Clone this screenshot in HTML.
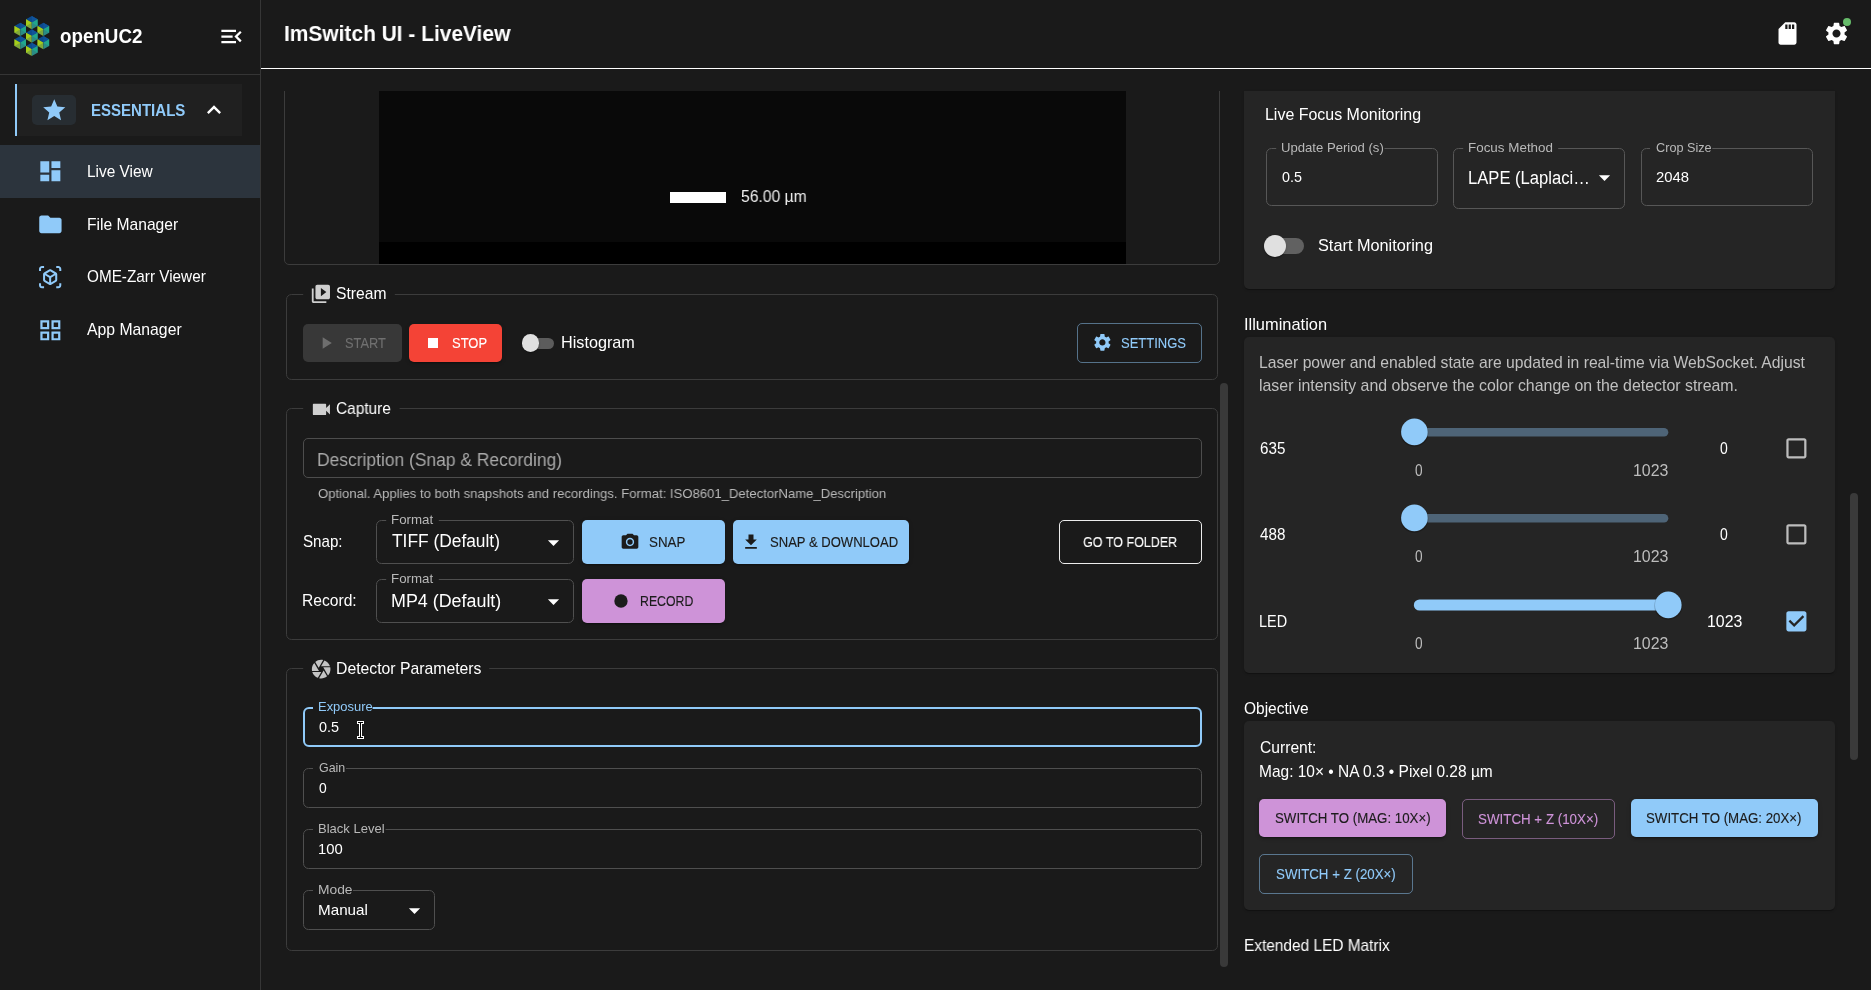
<!DOCTYPE html>
<html lang="en"><head><meta charset="utf-8"><title>ImSwitch UI - LiveView</title><style>
html,body{margin:0;padding:0;background:#1a1a1a;}
body{width:1871px;height:990px;position:relative;overflow:hidden;font-family:"Liberation Sans", sans-serif;}
div,button,nav,svg.ic,svg.fs,.abs,.t{position:absolute;}
#app{left:0;top:0;width:1871px;height:990px;will-change:transform}
nav{box-sizing:border-box}
button{padding:0;margin:0;border:0;background:none;font:inherit}
ul,li{margin:0;padding:0;list-style:none}
.t{margin:0;white-space:nowrap;line-height:0;height:0;transform-origin:0 0;display:block;font-style:normal}
h1,h2,h3,p,label{margin:0;font-weight:400}
</style></head>
<body>
<div id="app">
<nav class="abs" style="left:0;top:0;width:261px;height:990px;background:#1a1a1a;border-right:1px solid #363636">
<svg class="abs" style="left:0;top:0;width:70px;height:70px" viewBox="0 0 70 70"><polygon points="31.80,15.99 37.58,19.32 31.80,22.66 26.02,19.32" fill="#0c4a8e"/><polygon points="31.80,15.99 37.58,19.32 31.80,22.66" fill="#0f539a"/><polygon points="26.02,19.32 31.80,22.66 31.80,29.33 26.02,26.00" fill="#7fa83a"/><polygon points="26.02,19.32 31.80,22.66 26.02,26.00" fill="#a5cd1b"/><polygon points="31.80,22.66 37.58,19.32 37.58,26.00 31.80,29.33" fill="#2b8b84"/><polygon points="31.80,22.66 37.58,19.32 37.58,26.00" fill="#20a68d"/><polygon points="20.25,22.66 26.02,25.99 20.25,29.33 14.47,25.99" fill="#0c4a8e"/><polygon points="20.25,22.66 26.02,25.99 20.25,29.33" fill="#0f539a"/><polygon points="14.47,25.99 20.25,29.33 20.25,36.00 14.47,32.66" fill="#7fa83a"/><polygon points="14.47,25.99 20.25,29.33 14.47,32.66" fill="#a5cd1b"/><polygon points="20.25,29.33 26.02,25.99 26.02,32.66 20.25,36.00" fill="#2b8b84"/><polygon points="20.25,29.33 26.02,25.99 26.02,32.66" fill="#20a68d"/><polygon points="43.35,22.66 49.13,25.99 43.35,29.33 37.58,25.99" fill="#0c4a8e"/><polygon points="43.35,22.66 49.13,25.99 43.35,29.33" fill="#0f539a"/><polygon points="37.58,25.99 43.35,29.33 43.35,36.00 37.58,32.66" fill="#7fa83a"/><polygon points="37.58,25.99 43.35,29.33 37.58,32.66" fill="#a5cd1b"/><polygon points="43.35,29.33 49.13,25.99 49.13,32.66 43.35,36.00" fill="#2b8b84"/><polygon points="43.35,29.33 49.13,25.99 49.13,32.66" fill="#20a68d"/><polygon points="31.80,29.33 37.58,32.66 31.80,36.00 26.02,32.66" fill="#0c4a8e"/><polygon points="31.80,29.33 37.58,32.66 31.80,36.00" fill="#0f539a"/><polygon points="26.02,32.66 31.80,36.00 31.80,42.67 26.02,39.34" fill="#7fa83a"/><polygon points="26.02,32.66 31.80,36.00 26.02,39.34" fill="#a5cd1b"/><polygon points="31.80,36.00 37.58,32.66 37.58,39.34 31.80,42.67" fill="#2b8b84"/><polygon points="31.80,36.00 37.58,32.66 37.58,39.34" fill="#20a68d"/><polygon points="20.25,36.00 26.02,39.34 20.25,42.67 14.47,39.34" fill="#0c4a8e"/><polygon points="20.25,36.00 26.02,39.34 20.25,42.67" fill="#0f539a"/><polygon points="14.47,39.34 20.25,42.67 20.25,49.34 14.47,46.01" fill="#7fa83a"/><polygon points="14.47,39.34 20.25,42.67 14.47,46.01" fill="#a5cd1b"/><polygon points="20.25,42.67 26.02,39.34 26.02,46.01 20.25,49.34" fill="#2b8b84"/><polygon points="20.25,42.67 26.02,39.34 26.02,46.01" fill="#20a68d"/><polygon points="43.35,36.00 49.13,39.34 43.35,42.67 37.58,39.34" fill="#0c4a8e"/><polygon points="43.35,36.00 49.13,39.34 43.35,42.67" fill="#0f539a"/><polygon points="37.58,39.34 43.35,42.67 43.35,49.34 37.58,46.01" fill="#7fa83a"/><polygon points="37.58,39.34 43.35,42.67 37.58,46.01" fill="#a5cd1b"/><polygon points="43.35,42.67 49.13,39.34 49.13,46.01 43.35,49.34" fill="#2b8b84"/><polygon points="43.35,42.67 49.13,39.34 49.13,46.01" fill="#20a68d"/><polygon points="31.80,42.67 37.58,46.01 31.80,49.34 26.02,46.01" fill="#0c4a8e"/><polygon points="31.80,42.67 37.58,46.01 31.80,49.34" fill="#0f539a"/><polygon points="26.02,46.01 31.80,49.34 31.80,56.01 26.02,52.68" fill="#7fa83a"/><polygon points="26.02,46.01 31.80,49.34 26.02,52.68" fill="#a5cd1b"/><polygon points="31.80,49.34 37.58,46.01 37.58,52.68 31.80,56.01" fill="#2b8b84"/><polygon points="31.80,49.34 37.58,46.01 37.58,52.68" fill="#20a68d"/></svg>
<div class="t" style="left:60.10px;top:36px;font-size:20.8px;color:#fff;font-weight:700;transform:scaleX(0.9028)">openUC2</div>
<svg class="ic" viewBox="0 0 24 24" style="left:217.90px;top:22.70px;width:27px;height:27px;fill:#fff"><path d="M3 18h13v-2H3v2zm0-5h10v-2H3v2zm0-7v2h13V6H3zm18 9.590L17.420 12 21 8.410 19.590 7l-5 5 5 5L21 15.590z"/></svg>
<div style="left:0px;top:74px;width:260px;height:1px;background:#353535"></div>
<div style="left:15px;top:84px;width:227px;height:52px;background:#202020;border-left:2px solid #90caf9;box-sizing:border-box"></div>
<div style="left:32px;top:95px;width:44px;height:30px;background:#272d32;border-radius:5px"></div>
<svg class="ic" viewBox="0 0 24 24" style="left:40.75px;top:97.00px;width:26.5px;height:26.5px;fill:#90caf9"><path d="M12 17.270L18.180 21l-1.640-7.030L22 9.240l-7.190-.610L12 2 9.190 8.630 2 9.240l5.460 4.730L5.820 21z"/></svg>
<span class="t" style="left:90.87px;top:110px;font-size:16.2px;color:#90caf9;font-weight:700;transform:scaleX(0.9282)">ESSENTIALS</span>
<svg class="ic" viewBox="0 0 24 24" style="left:200.20px;top:96.45px;width:28px;height:28px;fill:#fff"><path d="M12 8l-6 6 1.410 1.410L12 10.830l4.590 4.580L18 14z"/></svg>
<div style="left:0px;top:145px;width:260px;height:53px;background:#2c343d"></div>
<ul>
<li><svg class="ic" viewBox="0 0 24 24" style="left:36.65px;top:157.95px;width:26.7px;height:26.7px;fill:#90caf9"><path d="M3 13h8V3H3v10zm0 8h8v-6H3v6zm10 0h8V11h-8v10zm0-18v6h8V3h-8z"/></svg><span class="t" style="left:86.72px;top:172px;font-size:15.75px;color:#fff;font-weight:400;transform:scaleX(0.9798)">Live View</span></li>
<li><svg class="ic" viewBox="0 0 24 24" style="left:36.60px;top:210.70px;width:26.8px;height:26.8px;fill:#90caf9"><path d="M10 4H4c-1.1 0-1.99.9-1.99 2L2 18c0 1.1.9 2 2 2h16c1.1 0 2-.9 2-2V8c0-1.1-.9-2-2-2h-8l-2-2z"/></svg><span class="t" style="left:86.61px;top:225px;font-size:15.75px;color:#fff;font-weight:400;transform:scaleX(0.9915)">File Manager</span></li>
<li><svg class="ic" viewBox="0 0 24 24" style="left:38.15px;top:265.05px;width:24.3px;height:24.3px;fill:#90caf9"><path d="M3 4c0-.55.45-1 1-1h2V1H4C2.34 1 1 2.34 1 4v2h2V4zm0 16v-2H1v2c0 1.66 1.34 3 3 3h2v-2H4c-.55 0-1-.45-1-1zM20 1h-2v2h2c.55 0 1 .45 1 1v2h2V4c0-1.66-1.34-3-3-3zm1 19c0 .55-.45 1-1 1h-2v2h2c1.66 0 3-1.34 3-3v-2h-2v2zm-2-5.13V9.130c0-.72-.38-1.380-1-1.730l-5-2.880c-.31-.18-.65-.27-1-.27s-.69.09-1 .27l-5 2.870c-.62.360-1 1.020-1 1.740v5.740c0 .72.38 1.380 1 1.730l5 2.880c.31.18.65.27 1 .27s.69-.09 1-.27l5-2.880c.62-.350 1-1.010 1-1.730zm-8 2.300l-4-2.300v-4.630l4 2.330v4.600zm1-6.330L8.040 8.530 12 6.250l3.960 2.280L12 10.840zm5 4.030l-4 2.300v-4.600l4-2.330v4.630z"/></svg><span class="t" style="left:87.00px;top:277px;font-size:15.75px;color:#fff;font-weight:400;transform:scaleX(0.9715)">OME-Zarr Viewer</span></li>
<li><svg class="ic" viewBox="0 0 24 24" style="left:36.75px;top:316.55px;width:26.7px;height:26.7px;fill:#90caf9"><path d="M3 3v8h8V3H3zm6 6H5V5h4v4zm-6 4v8h8v-8H3zm6 6H5v-4h4v4zm4-16v8h8V3h-8zm6 6h-4V5h4v4zm-6 4v8h8v-8h-8zm6 6h-4v-4h4v4z"/></svg><span class="t" style="left:86.90px;top:330px;font-size:15.75px;color:#fff;font-weight:400;transform:scaleX(1.0009)">App Manager</span></li>
</ul>
</nav>
<header>
<h1 class="t" style="left:283.78px;top:33px;font-size:22.8px;color:#fff;font-weight:700;transform:scaleX(0.9175)">ImSwitch UI - LiveView</h1>
<svg class="ic" viewBox="0 0 24 24" style="left:1773.60px;top:19.80px;width:27px;height:27px;fill:#fff"><path d="M18 2h-8L4.020 8 4 20c0 1.100.9 2 2 2h12c1.100 0 2-.9 2-2V4c0-1.100-.9-2-2-2zm-6 6h-2V4h2v4zm3 0h-2V4h2v4zm3 0h-2V4h2v4z"/></svg>
<svg class="ic" viewBox="0 0 24 24" style="left:1822.50px;top:19.80px;width:27px;height:27px;fill:#fff"><path d="M19.140 12.940c.04-.3.06-.61.06-.94 0-.32-.02-.64-.07-.94l2.030-1.580c.18-.14.23-.41.12-.61l-1.920-3.320c-.12-.22-.37-.29-.59-.22l-2.390.96c-.5-.38-1.030-.7-1.620-.94l-.36-2.540c-.04-.24-.24-.41-.48-.41h-3.840c-.24 0-.43.17-.47.41l-.36 2.540c-.59.24-1.130.57-1.620.94l-2.390-.96c-.22-.08-.47 0-.59.22L2.740 8.870c-.12.21-.08.47.12.61l2.030 1.580c-.05.3-.09.63-.09.94s.02.64.07.94l-2.030 1.580c-.18.14-.23.41-.12.61l1.920 3.320c.12.22.37.29.59.22l2.390-.96c.5.38 1.030.7 1.620.94l.36 2.540c.05.24.24.41.48.41h3.840c.24 0 .44-.17.47-.41l.36-2.540c.59-.24 1.130-.56 1.620-.94l2.390.96c.22.08.47 0 .59-.22l1.920-3.320c.12-.22.07-.47-.12-.61l-2.010-1.580zM12 15.600c-1.980 0-3.600-1.620-3.600-3.600s1.620-3.600 3.600-3.600 3.600 1.620 3.600 3.600-1.620 3.600-3.600 3.600z"/></svg>
<div style="left:1842.5px;top:17.5px;width:8.799999999999955px;height:8.8px;background:#66bb6a;border-radius:50%"></div>
<div style="left:261px;top:68px;width:1610px;height:1px;background:#fff"></div>
</header>
<main>
<section>
<div style="left:284px;top:85px;width:936px;height:180px;border:1px solid #3c3c3c;border-radius:5px;box-sizing:border-box;clip-path:inset(6px 0 0 0)"></div>
<div style="left:379px;top:91px;width:747px;height:173px;background:#090909"></div>
<div style="left:379px;top:241.7px;width:747px;height:22.30000000000001px;background:#000"></div>
<div style="left:670px;top:192px;width:55.5px;height:11px;background:#fff"></div>
<span class="t" style="left:741.30px;top:197px;font-size:16px;color:#f0f0f0;font-weight:400;transform:scaleX(0.9790)">56.00 µm</span>
</section>
<section>
<svg class="fs" style="left:286px;top:294px;width:932px;height:86px" viewBox="0 0 932 86"><path d="M17.20 0.5 H5.5 A5 5 0 0 0 0.5 5.5 V80.5 A5 5 0 0 0 5.5 85.5 H926.5 A5 5 0 0 0 931.5 80.5 V5.5 A5 5 0 0 0 926.5 0.5 H108.80" fill="none" stroke="#3c3c3c" stroke-width="1"/></svg>
<svg class="ic" viewBox="0 0 24 24" style="left:310.20px;top:283.10px;width:21.8px;height:21.8px;fill:#cfcfcf"><path d="M4 6H2v14c0 1.100.9 2 2 2h14v-2H4V6zm16-4H8c-1.100 0-2 .9-2 2v12c0 1.100.9 2 2 2h12c1.100 0 2-.9 2-2V4c0-1.100-.9-2-2-2zm-8 12.500v-9l6 4.500-6 4.500z"/></svg>
<h2 class="t" style="left:336.10px;top:294px;font-size:15.75px;color:#fff;font-weight:400;transform:scaleX(0.9932)">Stream</h2>
<button style="left:303px;top:324px;width:99px;height:38px;background:#383838;border-radius:5px"></button>
<svg class="ic" viewBox="0 0 24 24" style="left:316.00px;top:333.00px;width:20px;height:20px;fill:#6e6e6e"><path d="M8 5v14l11-7z"/></svg>
<span class="t" style="left:344.50px;top:343px;font-size:15.5px;color:#707070;font-weight:400;transform:scaleX(0.8275);-webkit-text-stroke:0.12px #707070">START</span>
<button style="left:409px;top:324px;width:93px;height:38px;background:#f44336;border-radius:5px;box-shadow:0 3px 1px -2px rgba(0,0,0,.2),0 2px 2px rgba(0,0,0,.14),0 1px 5px rgba(0,0,0,.12)"></button>
<svg class="ic" viewBox="0 0 24 24" style="left:423.00px;top:333.30px;width:20px;height:20px;fill:#fff"><path d="M6 6h12v12H6z"/></svg>
<span class="t" style="left:451.70px;top:343px;font-size:15.5px;color:#fff;font-weight:400;transform:scaleX(0.8369);-webkit-text-stroke:0.12px #fff">STOP</span>
<div style="left:524.5px;top:337.7px;width:29.5px;height:11.199999999999989px;background:#5c5c5c;border-radius:6px"></div>
<div style="left:521.8px;top:334.4px;width:17.40000000000009px;height:17.400000000000034px;background:#e0e0e0;border-radius:50%;box-shadow:0 2px 1px -1px rgba(0,0,0,.2),0 1px 1px rgba(0,0,0,.14),0 1px 3px rgba(0,0,0,.12)"></div>
<span class="t" style="left:560.77px;top:343px;font-size:15.75px;color:#fff;font-weight:400;transform:scaleX(1.0291)">Histogram</span>
<button style="left:1077px;top:323px;width:125px;height:40px;border:1px solid rgba(144,202,249,.5);border-radius:5px;box-sizing:border-box"></button>
<svg class="ic" viewBox="0 0 24 24" style="left:1091.60px;top:332.40px;width:20.8px;height:20.8px;fill:#90caf9"><path d="M19.140 12.940c.04-.3.06-.61.06-.94 0-.32-.02-.64-.07-.94l2.030-1.580c.18-.14.23-.41.12-.61l-1.920-3.320c-.12-.22-.37-.29-.59-.22l-2.390.96c-.5-.38-1.030-.7-1.620-.94l-.36-2.540c-.04-.24-.24-.41-.48-.41h-3.840c-.24 0-.43.17-.47.41l-.36 2.540c-.59.24-1.130.57-1.620.94l-2.390-.96c-.22-.08-.47 0-.59.22L2.740 8.870c-.12.21-.08.47.12.61l2.030 1.580c-.05.3-.09.63-.09.94s.02.64.07.94l-2.030 1.580c-.18.14-.23.41-.12.61l1.920 3.320c.12.22.37.29.59.22l2.390-.96c.5.38 1.030.7 1.620.94l.36 2.540c.05.24.24.41.48.41h3.840c.24 0 .44-.17.47-.41l.36-2.540c.59-.24 1.130-.56 1.620-.94l2.390.96c.22.08.47 0 .59-.22l1.920-3.320c.12-.22.07-.47-.12-.61l-2.010-1.580zM12 15.600c-1.980 0-3.600-1.620-3.600-3.600s1.620-3.600 3.600-3.600 3.600 1.620 3.600 3.600-1.620 3.600-3.600 3.600z"/></svg>
<span class="t" style="left:1120.50px;top:343px;font-size:15.5px;color:#90caf9;font-weight:400;transform:scaleX(0.8384);-webkit-text-stroke:0.12px #90caf9">SETTINGS</span>
</section>
<section>
<svg class="fs" style="left:286px;top:408px;width:932px;height:232px" viewBox="0 0 932 232"><path d="M17.20 0.5 H5.5 A5 5 0 0 0 0.5 5.5 V226.5 A5 5 0 0 0 5.5 231.5 H926.5 A5 5 0 0 0 931.5 226.5 V5.5 A5 5 0 0 0 926.5 0.5 H113.60" fill="none" stroke="#3c3c3c" stroke-width="1"/></svg>
<svg class="ic" viewBox="0 0 24 24" style="left:309.70px;top:397.70px;width:22.8px;height:22.8px;fill:#cfcfcf"><path d="M17 10.500V7c0-.55-.45-1-1-1H4c-.55 0-1 .45-1 1v10c0 .55.45 1 1 1h12c.55 0 1-.45 1-1v-3.500l4 4v-11l-4 4z"/></svg>
<h2 class="t" style="left:336.10px;top:409px;font-size:15.75px;color:#fff;font-weight:400;transform:scaleX(0.9792)">Capture</h2>
<div style="left:303px;top:438px;width:899px;height:40px;border:1px solid #4d4d4d;border-radius:5px;box-sizing:border-box"></div>
<span class="t" style="left:317.43px;top:460px;font-size:18px;color:#a9a9a9;font-weight:400;transform:scaleX(0.9685)">Description (Snap &amp; Recording)</span>
<p class="t" style="left:318.30px;top:494px;font-size:13.5px;color:#b9b9b9;font-weight:400;transform:scaleX(0.9709)">Optional. Applies to both snapshots and recordings. Format: ISO8601_DetectorName_Description</p>
<span class="t" style="left:303.30px;top:542px;font-size:15.75px;color:#fff;font-weight:400;transform:scaleX(0.9602)">Snap:</span>
<svg class="fs" style="left:376px;top:520px;width:198px;height:44px" viewBox="0 0 198 44"><path d="M10.20 0.5 H5.5 A5 5 0 0 0 0.5 5.5 V38.5 A5 5 0 0 0 5.5 43.5 H192.5 A5 5 0 0 0 197.5 38.5 V5.5 A5 5 0 0 0 192.5 0.5 H62.80" fill="none" stroke="#4f4f4f" stroke-width="1"/></svg>
<label class="t" style="left:390.71px;top:520px;font-size:13.5px;color:#b9b9b9;font-weight:400;transform:scaleX(0.9856)">Format</label>
<span class="t" style="left:392.20px;top:541px;font-size:18px;color:#fff;font-weight:400;transform:scaleX(0.9638)">TIFF (Default)</span>
<svg class="ic" viewBox="0 0 24 24" style="left:539.70px;top:528.64px;width:27px;height:27px;fill:#fff"><path d="M7 10l5 5 5-5z"/></svg>
<button style="left:582px;top:520px;width:143px;height:44px;background:#90caf9;border-radius:5px;box-shadow:0 3px 1px -2px rgba(0,0,0,.2),0 2px 2px rgba(0,0,0,.14),0 1px 5px rgba(0,0,0,.12)"></button>
<svg class="ic" viewBox="0 0 24 24" style="left:619.70px;top:532.43px;width:20px;height:20px;fill:#1c1c1c"><circle cx="12" cy="12" r="3.200"/><path d="M9 2L7.170 4H4c-1.100 0-2 .9-2 2v12c0 1.100.9 2 2 2h16c1.100 0 2-.9 2-2V6c0-1.100-.9-2-2-2h-3.170L15 2H9zm3 15c-2.760 0-5-2.240-5-5s2.240-5 5-5 5 2.240 5 5-2.240 5-5 5z"/></svg>
<span class="t" style="left:648.70px;top:542px;font-size:15.5px;color:#1c1c1c;font-weight:400;transform:scaleX(0.8598);-webkit-text-stroke:0.15px #1c1c1c">SNAP</span>
<button style="left:733px;top:520px;width:176px;height:44px;background:#90caf9;border-radius:5px;box-shadow:0 3px 1px -2px rgba(0,0,0,.2),0 2px 2px rgba(0,0,0,.14),0 1px 5px rgba(0,0,0,.12)"></button>
<svg class="ic" viewBox="0 0 24 24" style="left:741.00px;top:532.22px;width:20px;height:20px;fill:#1c1c1c"><path d="M5 20h14v-2H5v2zM19 9h-4V3H9v6H5l7 7 7-7z"/></svg>
<span class="t" style="left:769.60px;top:542px;font-size:15.5px;color:#1c1c1c;font-weight:400;transform:scaleX(0.8420);-webkit-text-stroke:0.15px #1c1c1c">SNAP &amp; DOWNLOAD</span>
<button style="left:1059px;top:520px;width:143px;height:44px;border:1px solid #ececec;border-radius:5px;box-sizing:border-box"></button>
<span class="t" style="left:1083.40px;top:542px;font-size:15.5px;color:#fff;font-weight:400;transform:scaleX(0.8084);-webkit-text-stroke:0.12px #fff">GO TO FOLDER</span>
<span class="t" style="left:302.31px;top:601px;font-size:15.75px;color:#fff;font-weight:400;transform:scaleX(0.9911)">Record:</span>
<svg class="fs" style="left:376px;top:579px;width:198px;height:44px" viewBox="0 0 198 44"><path d="M10.20 0.5 H5.5 A5 5 0 0 0 0.5 5.5 V38.5 A5 5 0 0 0 5.5 43.5 H192.5 A5 5 0 0 0 197.5 38.5 V5.5 A5 5 0 0 0 192.5 0.5 H62.80" fill="none" stroke="#4f4f4f" stroke-width="1"/></svg>
<label class="t" style="left:390.71px;top:579px;font-size:13.5px;color:#b9b9b9;font-weight:400;transform:scaleX(0.9856)">Format</label>
<span class="t" style="left:391.41px;top:601px;font-size:18px;color:#fff;font-weight:400;transform:scaleX(0.9932)">MP4 (Default)</span>
<svg class="ic" viewBox="0 0 24 24" style="left:539.70px;top:587.64px;width:27px;height:27px;fill:#fff"><path d="M7 10l5 5 5-5z"/></svg>
<button style="left:582px;top:579px;width:143px;height:44px;background:#ce93d8;border-radius:5px;box-shadow:0 3px 1px -2px rgba(0,0,0,.2),0 2px 2px rgba(0,0,0,.14),0 1px 5px rgba(0,0,0,.12)"></button>
<svg class="ic" viewBox="0 0 24 24" style="left:610.80px;top:591.20px;width:20px;height:20px;fill:#1c1c1c"><circle cx="12" cy="12" r="8"/></svg>
<span class="t" style="left:639.71px;top:601px;font-size:15.5px;color:#1c1c1c;font-weight:400;transform:scaleX(0.7942);-webkit-text-stroke:0.15px #1c1c1c">RECORD</span>
</section>
<section>
<svg class="fs" style="left:286px;top:668px;width:932px;height:283px" viewBox="0 0 932 283"><path d="M17.20 0.5 H5.5 A5 5 0 0 0 0.5 5.5 V277.5 A5 5 0 0 0 5.5 282.5 H926.5 A5 5 0 0 0 931.5 277.5 V5.5 A5 5 0 0 0 926.5 0.5 H203.20" fill="none" stroke="#3c3c3c" stroke-width="1"/></svg>
<svg class="ic" viewBox="0 0 24 24" style="left:310.05px;top:657.75px;width:22.3px;height:22.3px;fill:#c4c4c4"><path d="M9.400 10.500l4.770-8.260C13.470 2.090 12.750 2 12 2c-2.400 0-4.600.85-6.320 2.250l3.660 6.350.06-.1zM21.540 9c-.92-2.920-3.150-5.260-6-6.340L11.880 9h9.660zm.26 1h-7.490l.29.5 4.760 8.250C21 16.970 22 14.610 22 12c0-.69-.07-1.350-.2-2zM8.540 12l-3.900-6.750C3.010 7.030 2 9.390 2 12c0 .69.07 1.350.2 2h7.490l-1.150-2zm-6.080 3c.92 2.920 3.150 5.260 6 6.340L12.120 15H2.460zm11.270 0l-3.900 6.760c.7.150 1.420.24 2.170.24 2.400 0 4.600-.85 6.320-2.250l-3.660-6.350-.93 1.600z"/></svg>
<h2 class="t" style="left:336.00px;top:669px;font-size:15.75px;color:#fff;font-weight:400;transform:scaleX(1.0012)">Detector Parameters</h2>
<svg class="fs" style="left:303px;top:707px;width:899px;height:40px" viewBox="0 0 899 40"><path d="M10.00 1.0 H6.0 A5 5 0 0 0 1.0 6.0 V34.0 A5 5 0 0 0 6.0 39.0 H893.0 A5 5 0 0 0 898.0 34.0 V6.0 A5 5 0 0 0 893.0 1.0 H69.60" fill="none" stroke="#90caf9" stroke-width="2"/></svg>
<label class="t" style="left:317.74px;top:707px;font-size:13.5px;color:#90caf9;font-weight:400;transform:scaleX(0.9581)">Exposure</label>
<span class="t" style="left:318.80px;top:727px;font-size:14.6px;color:#fff;font-weight:400;transform:scaleX(0.9866)">0.5</span>
<svg class="fs" style="left:303px;top:768px;width:899px;height:40px" viewBox="0 0 899 40"><path d="M10.00 0.5 H5.5 A5 5 0 0 0 0.5 5.5 V34.5 A5 5 0 0 0 5.5 39.5 H893.5 A5 5 0 0 0 898.5 34.5 V5.5 A5 5 0 0 0 893.5 0.5 H43.00" fill="none" stroke="#4f4f4f" stroke-width="1"/></svg>
<label class="t" style="left:318.70px;top:768px;font-size:13.5px;color:#b9b9b9;font-weight:400;transform:scaleX(0.9212)">Gain</label>
<span class="t" style="left:318.80px;top:788px;font-size:14.6px;color:#fff;font-weight:400;transform:scaleX(0.9500)">0</span>
<svg class="fs" style="left:303px;top:829px;width:899px;height:40px" viewBox="0 0 899 40"><path d="M10.00 0.5 H5.5 A5 5 0 0 0 0.5 5.5 V34.5 A5 5 0 0 0 5.5 39.5 H893.5 A5 5 0 0 0 898.5 34.5 V5.5 A5 5 0 0 0 893.5 0.5 H82.50" fill="none" stroke="#4f4f4f" stroke-width="1"/></svg>
<label class="t" style="left:317.74px;top:829px;font-size:13.5px;color:#b9b9b9;font-weight:400;transform:scaleX(0.9642)">Black Level</label>
<span class="t" style="left:318.18px;top:849px;font-size:14.6px;color:#fff;font-weight:400;transform:scaleX(1.0158)">100</span>
<svg class="fs" style="left:303px;top:890px;width:132px;height:40px" viewBox="0 0 132 40"><path d="M10.00 0.5 H5.5 A5 5 0 0 0 0.5 5.5 V34.5 A5 5 0 0 0 5.5 39.5 H126.5 A5 5 0 0 0 131.5 34.5 V5.5 A5 5 0 0 0 126.5 0.5 H50.00" fill="none" stroke="#4f4f4f" stroke-width="1"/></svg>
<label class="t" style="left:317.68px;top:890px;font-size:13.5px;color:#b9b9b9;font-weight:400;transform:scaleX(1.0229)">Mode</label>
<span class="t" style="left:317.76px;top:910px;font-size:14.6px;color:#fff;font-weight:400;transform:scaleX(1.0424)">Manual</span>
<svg class="ic" viewBox="0 0 24 24" style="left:400.70px;top:896.84px;width:27px;height:27px;fill:#fff"><path d="M7 10l5 5 5-5z"/></svg>
<svg class="abs" style="left:355px;top:719px;width:12px;height:22px" viewBox="355 719 12 22" shape-rendering="crispEdges"><g fill="#fff"><rect x="357" y="721" width="7" height="3"/><rect x="359" y="721" width="3" height="18"/><rect x="357" y="736" width="7" height="3"/></g><g fill="#000"><rect x="358" y="722" width="5" height="1"/><rect x="360" y="722" width="1" height="16"/><rect x="358" y="737" width="5" height="1"/></g></svg>
</section>
<div style="left:1220px;top:383px;width:8px;height:584.3px;background:#393939;border-radius:4px"></div>
</main>
<aside>
<div style="left:1244px;top:91px;width:591px;height:198px;background:#252525;border-radius:0 0 5px 5px;box-shadow:0 2px 1px -1px rgba(0,0,0,.2),0 1px 1px rgba(0,0,0,.14),0 1px 3px rgba(0,0,0,.12)"></div>
<h3 class="t" style="left:1265.19px;top:115px;font-size:15.75px;color:#fff;font-weight:400;transform:scaleX(1.0131)">Live Focus Monitoring</h3>
<svg class="fs" style="left:1266px;top:148px;width:172px;height:58px" viewBox="0 0 172 58"><path d="M10.20 0.5 H5.5 A5 5 0 0 0 0.5 5.5 V52.5 A5 5 0 0 0 5.5 57.5 H166.5 A5 5 0 0 0 171.5 52.5 V5.5 A5 5 0 0 0 166.5 0.5 H118.50" fill="none" stroke="#575757" stroke-width="1"/></svg>
<label class="t" style="left:1280.73px;top:148px;font-size:13.5px;color:#b9b9b9;font-weight:400;transform:scaleX(0.9712)">Update Period (s)</label>
<span class="t" style="left:1281.80px;top:177px;font-size:14.6px;color:#fff;font-weight:400;transform:scaleX(0.9816)">0.5</span>
<svg class="fs" style="left:1453px;top:148px;width:172px;height:61px" viewBox="0 0 172 61"><path d="M10.20 0.5 H5.5 A5 5 0 0 0 0.5 5.5 V55.5 A5 5 0 0 0 5.5 60.5 H166.5 A5 5 0 0 0 171.5 55.5 V5.5 A5 5 0 0 0 166.5 0.5 H105.20" fill="none" stroke="#575757" stroke-width="1"/></svg>
<label class="t" style="left:1467.61px;top:148px;font-size:13.5px;color:#b9b9b9;font-weight:400;transform:scaleX(0.9936)">Focus Method</label>
<span class="t" style="left:1468.38px;top:178px;font-size:18px;color:#fff;font-weight:400;transform:scaleX(0.9228)">LAPE (Laplaci…</span>
<svg class="ic" viewBox="0 0 24 24" style="left:1590.70px;top:164.44px;width:27px;height:27px;fill:#fff"><path d="M7 10l5 5 5-5z"/></svg>
<svg class="fs" style="left:1641px;top:148px;width:172px;height:58px" viewBox="0 0 172 58"><path d="M9.00 0.5 H5.5 A5 5 0 0 0 0.5 5.5 V52.5 A5 5 0 0 0 5.5 57.5 H166.5 A5 5 0 0 0 171.5 52.5 V5.5 A5 5 0 0 0 166.5 0.5 H71.30" fill="none" stroke="#575757" stroke-width="1"/></svg>
<label class="t" style="left:1656.30px;top:148px;font-size:13.5px;color:#b9b9b9;font-weight:400;transform:scaleX(0.9393)">Crop Size</label>
<span class="t" style="left:1656.20px;top:177px;font-size:14.6px;color:#fff;font-weight:400;transform:scaleX(1.0170)">2048</span>
<div style="left:1267px;top:238.2px;width:37.40000000000009px;height:15.800000000000011px;background:#616161;border-radius:8px"></div>
<div style="left:1263.7px;top:234.9px;width:22.59999999999991px;height:22.599999999999994px;background:#e0e0e0;border-radius:50%;box-shadow:0 2px 1px -1px rgba(0,0,0,.2),0 1px 1px rgba(0,0,0,.14),0 1px 3px rgba(0,0,0,.12)"></div>
<span class="t" style="left:1317.50px;top:246px;font-size:15.75px;color:#fff;font-weight:400;transform:scaleX(1.0343)">Start Monitoring</span>
<h3 class="t" style="left:1243.86px;top:325px;font-size:15.75px;color:#fff;font-weight:400;transform:scaleX(1.0423)">Illumination</h3>
<div style="left:1244px;top:337px;width:591px;height:336px;background:#252525;border-radius:5px;box-shadow:0 2px 1px -1px rgba(0,0,0,.2),0 1px 1px rgba(0,0,0,.14),0 1px 3px rgba(0,0,0,.12)"></div>
<p class="t" style="left:1258.90px;top:363px;font-size:15.75px;color:#c0c0c0;font-weight:400;transform:scaleX(0.9967)">Laser power and enabled state are updated in real-time via WebSocket. Adjust</p>
<p class="t" style="left:1258.89px;top:386px;font-size:15.75px;color:#c0c0c0;font-weight:400;transform:scaleX(1.0094)">laser intensity and observe the color change on the detector stream.</p>
<span class="t" style="left:1259.80px;top:449px;font-size:15.75px;color:#fff;font-weight:400;transform:scaleX(0.9654)">635</span><svg class="abs" style="left:1390px;top:412px;width:310px;height:40px" viewBox="1390 412 310 40"><rect x="1413.9" y="427.9" width="254.39999999999986" height="8.6" rx="4.3" fill="#4e6477"/><circle cx="1414.4" cy="432.9" r="14" fill="rgba(0,0,0,.22)"/><circle cx="1414.4" cy="431.9" r="13.3" fill="#90caf9"/></svg><span class="t" style="left:1414.60px;top:471px;font-size:15.75px;color:#bdbdbd;font-weight:400;transform:scaleX(0.8667)">0</span><span class="t" style="left:1632.89px;top:471px;font-size:15.75px;color:#bdbdbd;font-weight:400;transform:scaleX(1.0094)">1023</span><span class="t" style="left:1720.20px;top:449px;font-size:15.75px;color:#fff;font-weight:400;transform:scaleX(0.8889)">0</span><svg class="ic" viewBox="0 0 24 24" style="left:1782.65px;top:434.65px;width:26.8px;height:26.8px;fill:#bdbdbd"><path d="M19 5v14H5V5h14m0-2H5c-1.100 0-2 .9-2 2v14c0 1.100.9 2 2 2h14c1.100 0 2-.9 2-2V5c0-1.100-.9-2-2-2z"/></svg>
<span class="t" style="left:1259.80px;top:535px;font-size:15.75px;color:#fff;font-weight:400;transform:scaleX(0.9654)">488</span><svg class="abs" style="left:1390px;top:498.4px;width:310px;height:40px" viewBox="1390 498.4 310 40"><rect x="1413.9" y="514.3" width="254.39999999999986" height="8.6" rx="4.3" fill="#4e6477"/><circle cx="1414.4" cy="519.3" r="14" fill="rgba(0,0,0,.22)"/><circle cx="1414.4" cy="518.3" r="13.3" fill="#90caf9"/></svg><span class="t" style="left:1414.60px;top:557px;font-size:15.75px;color:#bdbdbd;font-weight:400;transform:scaleX(0.8667)">0</span><span class="t" style="left:1632.89px;top:557px;font-size:15.75px;color:#bdbdbd;font-weight:400;transform:scaleX(1.0094)">1023</span><span class="t" style="left:1720.20px;top:535px;font-size:15.75px;color:#fff;font-weight:400;transform:scaleX(0.8889)">0</span><svg class="ic" viewBox="0 0 24 24" style="left:1782.65px;top:521.05px;width:26.8px;height:26.8px;fill:#bdbdbd"><path d="M19 5v14H5V5h14m0-2H5c-1.100 0-2 .9-2 2v14c0 1.100.9 2 2 2h14c1.100 0 2-.9 2-2V5c0-1.100-.9-2-2-2z"/></svg>
<span class="t" style="left:1258.88px;top:622px;font-size:15.75px;color:#fff;font-weight:400;transform:scaleX(0.9158)">LED</span><svg class="abs" style="left:1390px;top:585px;width:310px;height:40px" viewBox="1390 585 310 40"><rect x="1413.9" y="600.9" width="254.39999999999986" height="8.6" rx="4.3" fill="#4e6477"/><rect x="1413.9" y="599.4" width="254.39999999999986" height="11.2" rx="5.6" fill="#90caf9"/><circle cx="1668.3" cy="605.9" r="14" fill="rgba(0,0,0,.22)"/><circle cx="1668.3" cy="604.9" r="13.3" fill="#90caf9"/></svg><span class="t" style="left:1414.60px;top:644px;font-size:15.75px;color:#bdbdbd;font-weight:400;transform:scaleX(0.8667)">0</span><span class="t" style="left:1632.89px;top:644px;font-size:15.75px;color:#bdbdbd;font-weight:400;transform:scaleX(1.0094)">1023</span><span class="t" style="left:1706.59px;top:622px;font-size:15.75px;color:#fff;font-weight:400;transform:scaleX(1.0094)">1023</span><svg class="ic" viewBox="0 0 24 24" style="left:1782.65px;top:607.65px;width:26.8px;height:26.8px;fill:#90caf9"><path d="M19 3H5c-1.110 0-2 .9-2 2v14c0 1.100.89 2 2 2h14c1.110 0 2-.9 2-2V5c0-1.100-.89-2-2-2zm-9 14l-5-5 1.410-1.410L10 14.170l7.590-7.590L19 8l-9 9z"/></svg>
<h3 class="t" style="left:1243.90px;top:709px;font-size:15.75px;color:#fff;font-weight:400;transform:scaleX(0.9834)">Objective</h3>
<div style="left:1244px;top:721px;width:591px;height:189px;background:#252525;border-radius:5px;box-shadow:0 2px 1px -1px rgba(0,0,0,.2),0 1px 1px rgba(0,0,0,.14),0 1px 3px rgba(0,0,0,.12)"></div>
<span class="t" style="left:1259.50px;top:748px;font-size:15.75px;color:#fff;font-weight:400;transform:scaleX(0.9925)">Current:</span>
<span class="t" style="left:1258.92px;top:772px;font-size:15.75px;color:#fff;font-weight:400;transform:scaleX(0.9835)">Mag: 10× • NA 0.3 • Pixel 0.28 µm</span>
<button style="left:1259px;top:799px;width:187px;height:38px;background:#ce93d8;border-radius:5px;box-shadow:0 3px 1px -2px rgba(0,0,0,.2),0 2px 2px rgba(0,0,0,.14),0 1px 5px rgba(0,0,0,.12)"></button>
<span class="t" style="left:1274.70px;top:818px;font-size:15.0px;color:#1c1c1c;font-weight:400;transform:scaleX(0.8858);-webkit-text-stroke:0.15px #1c1c1c">SWITCH TO (MAG: 10X×)</span>
<button style="left:1462px;top:799px;width:153px;height:40px;border:1px solid rgba(206,147,216,.5);border-radius:5px;box-sizing:border-box"></button>
<span class="t" style="left:1478.30px;top:819px;font-size:15.0px;color:#ce93d8;font-weight:400;transform:scaleX(0.8902);-webkit-text-stroke:0.12px #ce93d8">SWITCH + Z (10X×)</span>
<button style="left:1631px;top:799px;width:187px;height:38px;background:#90caf9;border-radius:5px;box-shadow:0 3px 1px -2px rgba(0,0,0,.2),0 2px 2px rgba(0,0,0,.14),0 1px 5px rgba(0,0,0,.12)"></button>
<span class="t" style="left:1646.30px;top:818px;font-size:15.0px;color:#1c1c1c;font-weight:400;transform:scaleX(0.8847);-webkit-text-stroke:0.15px #1c1c1c">SWITCH TO (MAG: 20X×)</span>
<button style="left:1259px;top:854px;width:154px;height:40px;border:1px solid rgba(144,202,249,.5);border-radius:5px;box-sizing:border-box"></button>
<span class="t" style="left:1275.80px;top:874px;font-size:15.0px;color:#90caf9;font-weight:400;transform:scaleX(0.8872);-webkit-text-stroke:0.12px #90caf9">SWITCH + Z (20X×)</span>
<h3 class="t" style="left:1243.52px;top:946px;font-size:15.75px;color:#fff;font-weight:400;transform:scaleX(0.9788)">Extended LED Matrix</h3>
<div style="left:1849.8px;top:493px;width:8.400000000000091px;height:266.5px;background:#3a3a3a;border-radius:4px"></div>
</aside>
</div>
</body></html>
